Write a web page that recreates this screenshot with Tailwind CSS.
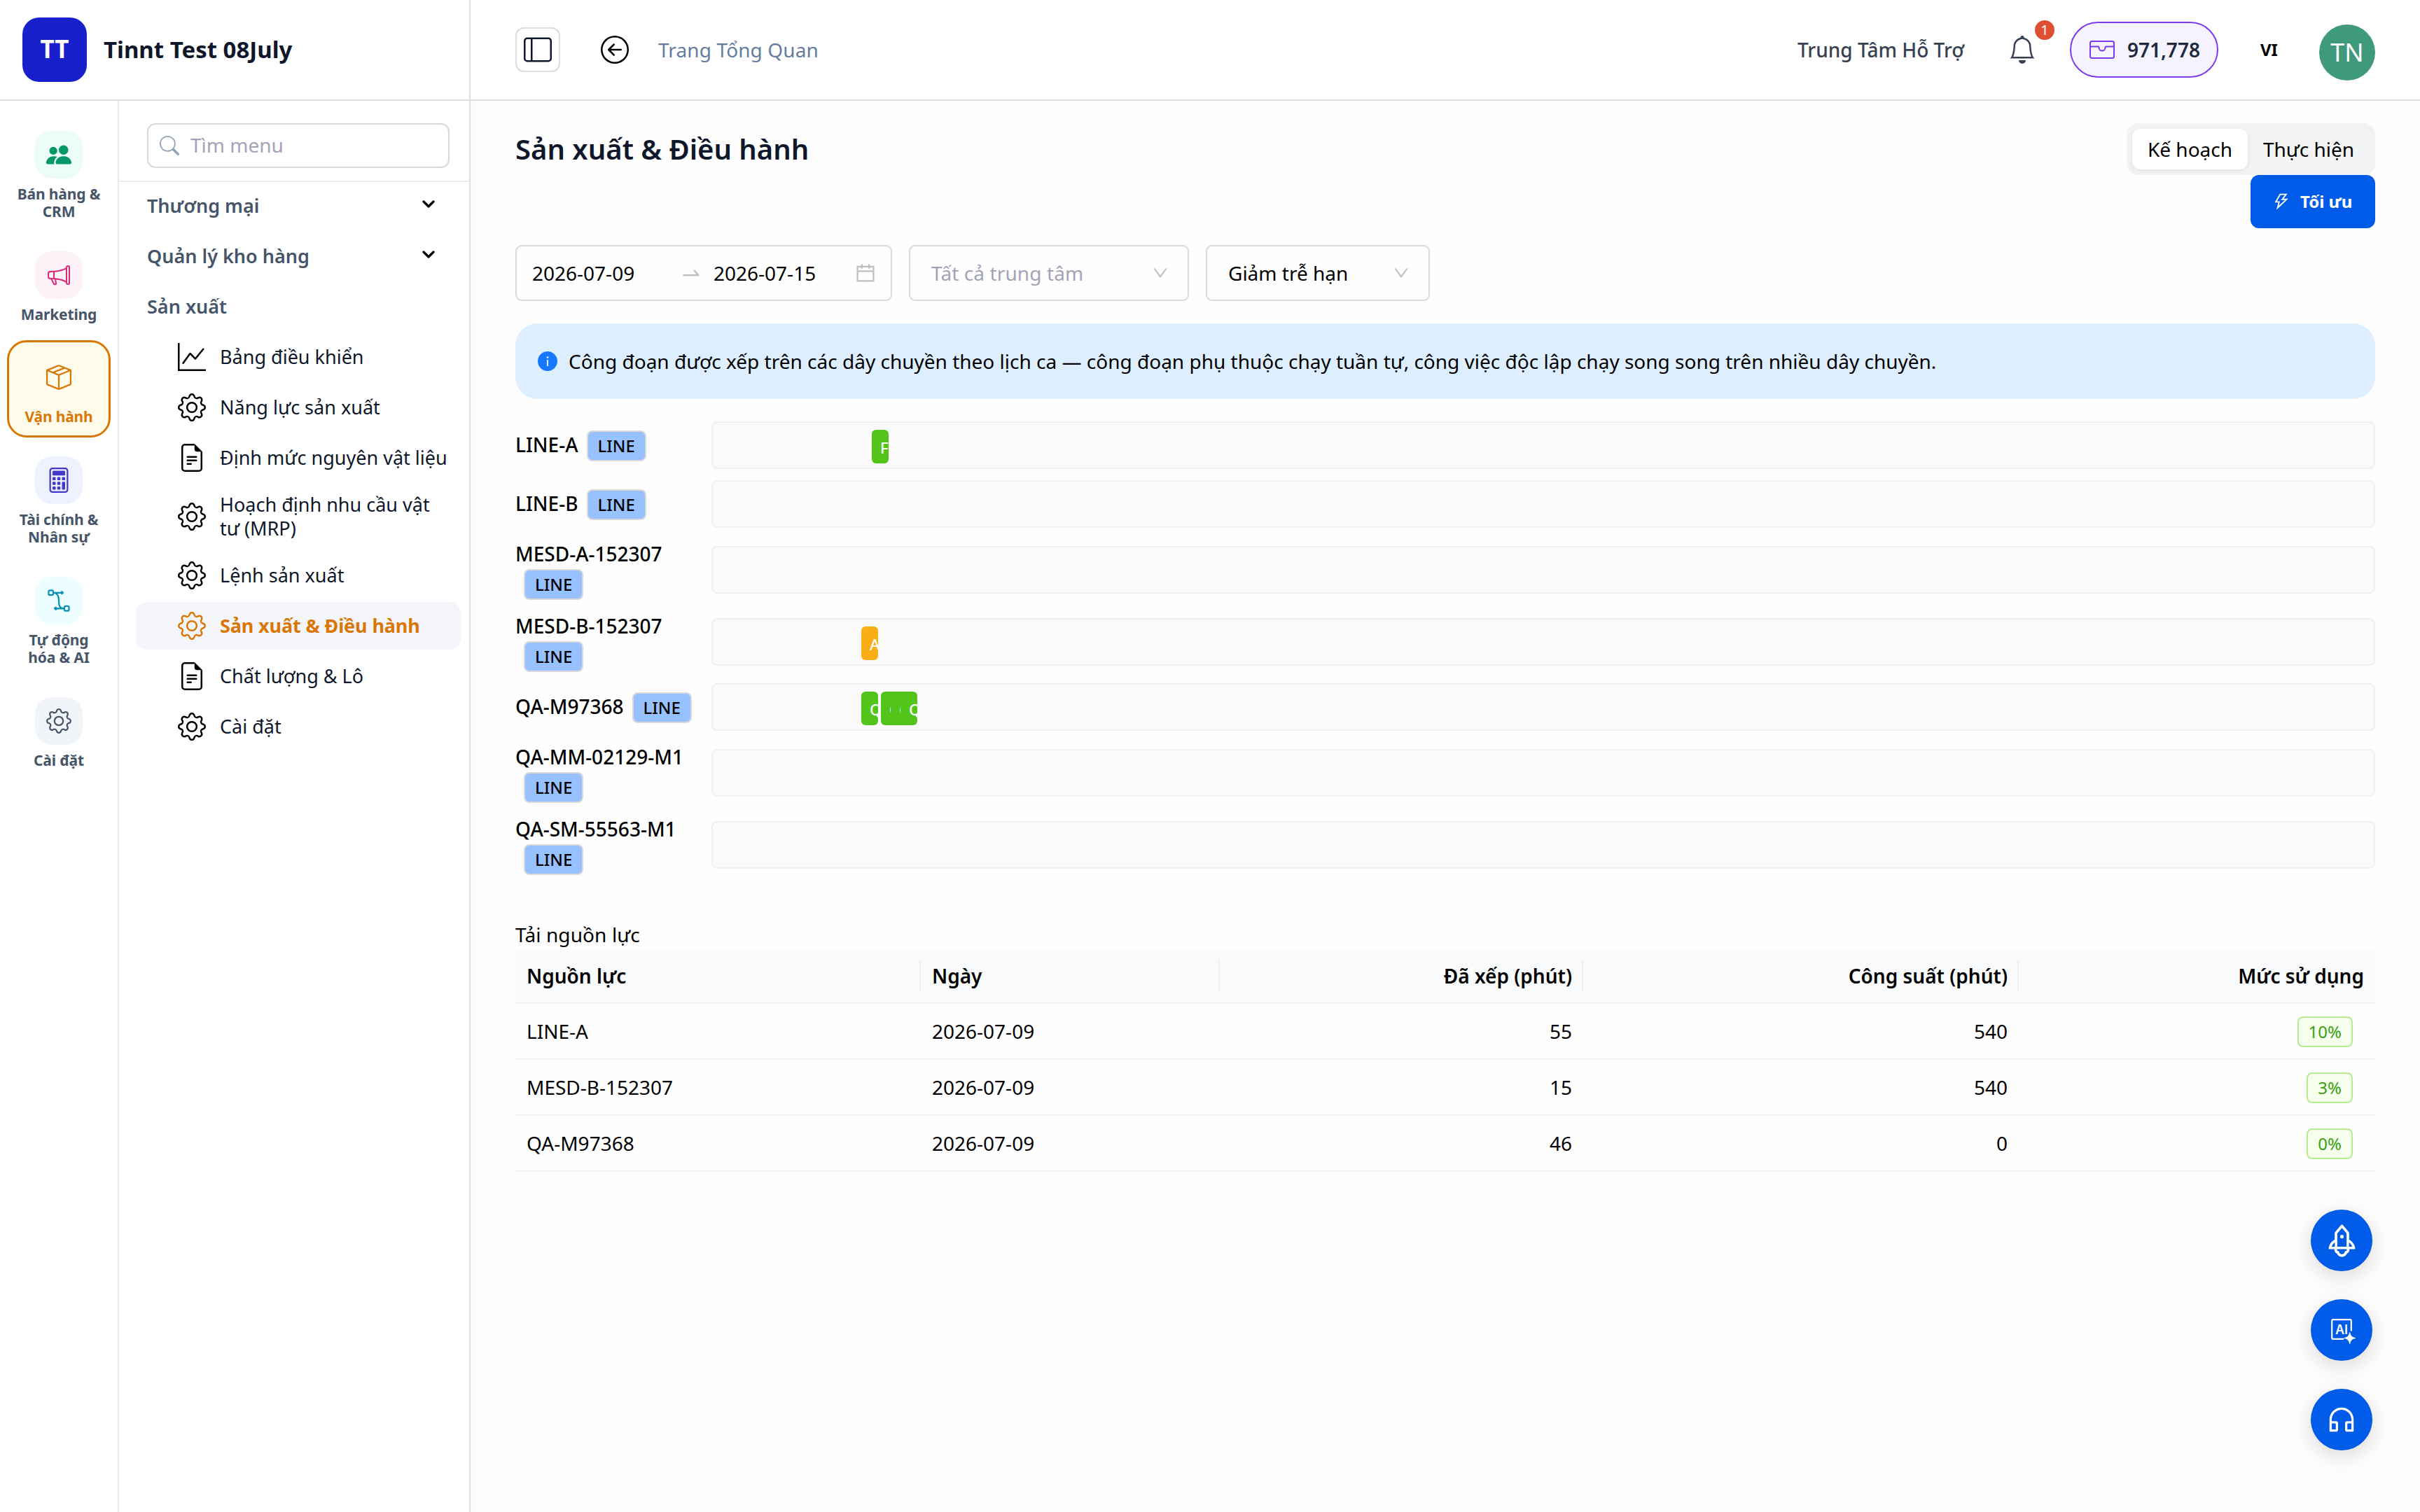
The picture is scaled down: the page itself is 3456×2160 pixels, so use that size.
<!DOCTYPE html>
<html lang="vi">
<head>
    <meta charset="UTF-8">
    <meta name="viewport" content="width=device-width, initial-scale=1.0">
    <title>Sản xuất & Điều hành</title>
    <script src="https://cdn.jsdelivr.net/npm/@tailwindcss/browser@4"></script>
</head>
<body class="bg-white font-['Noto_Sans',sans-serif] text-[28px] text-black leading-[44px]">

<!-- Icons dùng chung -->
<svg class="hidden">
    <symbol id="gear" viewBox="0 0 16 16"><path d="M8 4.754a3.246 3.246 0 1 0 0 6.492 3.246 3.246 0 0 0 0-6.492zM5.754 8a2.246 2.246 0 1 1 4.492 0 2.246 2.246 0 0 1-4.492 0z"/><path d="M9.796 1.343c-.527-1.79-3.065-1.79-3.592 0l-.094.319a.873.873 0 0 1-1.255.52l-.292-.16c-1.64-.892-3.433.902-2.54 2.541l.159.292a.873.873 0 0 1-.52 1.255l-.319.094c-1.79.527-1.79 3.065 0 3.592l.319.094a.873.873 0 0 1 .52 1.255l-.16.292c-.892 1.64.901 3.434 2.541 2.54l.292-.159a.873.873 0 0 1 1.255.52l.094.319c.527 1.79 3.065 1.79 3.592 0l.094-.319a.873.873 0 0 1 1.255-.52l.292.16c1.64.893 3.434-.902 2.54-2.541l-.159-.292a.873.873 0 0 1 .52-1.255l.319-.094c1.79-.527 1.79-3.065 0-3.592l-.319-.094a.873.873 0 0 1-.52-1.255l.16-.292c.893-1.64-.902-3.433-2.541-2.54l-.292.159a.873.873 0 0 1-1.255-.52l-.094-.319zm-2.633.283c.246-.835 1.428-.835 1.674 0l.094.319a1.873 1.873 0 0 0 2.693 1.115l.291-.16c.764-.415 1.6.42 1.184 1.185l-.159.292a1.873 1.873 0 0 0 1.116 2.692l.318.094c.835.246.835 1.428 0 1.674l-.319.094a1.873 1.873 0 0 0-1.115 2.693l.16.291c.415.764-.42 1.6-1.185 1.184l-.291-.159a1.873 1.873 0 0 0-2.693 1.116l-.094.318c-.246.835-1.428.835-1.674 0l-.094-.319a1.873 1.873 0 0 0-2.692-1.115l-.292.16c-.764.415-1.6-.42-1.184-1.185l.159-.291A1.873 1.873 0 0 0 1.945 8.93l-.319-.094c-.835-.246-.835-1.428 0-1.674l.319-.094A1.873 1.873 0 0 0 3.06 4.377l-.16-.292c-.415-.764.42-1.6 1.185-1.184l.292.159a1.873 1.873 0 0 0 2.692-1.115l.094-.319z"/></symbol>
    <symbol id="file" viewBox="0 0 16 16"><path d="M4 0h5.5v1H4a1 1 0 0 0-1 1v12a1 1 0 0 0 1 1h8a1 1 0 0 0 1-1V4.5h1V14a2 2 0 0 1-2 2H4a2 2 0 0 1-2-2V2a2 2 0 0 1 2-2z"/><path d="M9.5 3V0L14 4.5h-3A1.5 1.5 0 0 1 9.5 3z"/><path d="M5.5 7a.5.5 0 0 0 0 1h5a.5.5 0 0 0 0-1zM5 9.5a.5.5 0 0 1 .5-.5h5a.5.5 0 0 1 0 1h-5a.5.5 0 0 1-.5-.5m0 2a.5.5 0 0 1 .5-.5h2a.5.5 0 0 1 0 1h-2a.5.5 0 0 1-.5-.5"/></symbol>
    <symbol id="chevron" viewBox="0 0 18 12"><path d="M2 2l7 7 7-7" fill="none" stroke="currentColor" stroke-width="3.2" stroke-linecap="round" stroke-linejoin="round"/></symbol>
    <symbol id="down" viewBox="0 0 1024 1024"><path d="M884 256h-75c-5.1 0-9.9 2.5-12.9 6.6L512 654.2 227.9 262.6c-3-4.1-7.8-6.6-12.9-6.6h-75c-6.5 0-10.3 7.4-6.5 12.7l352.6 486.1c12.8 17.6 39 17.6 51.7 0l352.6-486.1c3.9-5.3.1-12.7-6.4-12.7z"/></symbol>
</svg>

<div class="flex h-[2160px] w-[3456px] overflow-hidden">

    <!-- Sidebar -->
    <aside class="flex w-[672px] shrink-0 flex-col border-r-2 border-[#dddee4]">
        <div class="flex h-36 shrink-0 items-center gap-6 border-b-2 border-[#dddee4] pl-8">
            <div class="flex size-[92px] items-center justify-center rounded-3xl bg-[#1720cb] pb-[3px] text-[35px] font-bold text-white">TT</div>
            <span class="text-[33px] font-bold text-[#0f172a]">Tinnt Test 08July</span>
        </div>

        <div class="flex min-h-0 flex-1">
            <!-- Phân hệ -->
            <nav class="flex w-[170px] shrink-0 flex-col gap-2 border-r-2 border-[#e8e8ef] px-2.5 pt-6 text-center text-[21px] leading-[25.2px] font-bold tracking-[-0.15px] text-[#475569]">
                <div class="flex flex-col items-center gap-2.5 rounded-[28px] border-[3px] border-transparent pt-4 pb-[13.4px]">
                    <div class="flex size-[68px] items-center justify-center rounded-3xl bg-[#ecfdf5] text-[#059669]">
                        <svg class="size-9 fill-current" viewBox="0 0 16 16"><path d="M7 14s-1 0-1-1 1-4 5-4 5 3 5 4-1 1-1 1H7Zm4-6a3 3 0 1 0 0-6 3 3 0 0 0 0 6Zm-5.784 6A2.238 2.238 0 0 1 5 13c0-1.355.68-2.75 1.936-3.72A6.325 6.325 0 0 0 5 9c-4 0-5 3-5 4s1 1 1 1h4.216ZM4.5 8a2.5 2.5 0 1 0 0-5 2.5 2.5 0 0 0 0 5Z"/></svg>
                    </div>
                    <span>Bán hàng &amp;<br>CRM</span>
                </div>
                <div class="flex flex-col items-center gap-2.5 rounded-[28px] border-[3px] border-transparent pt-4 pb-[13.4px]">
                    <div class="flex size-[68px] items-center justify-center rounded-3xl bg-[#fdf2f8] text-[#db2777]">
                        <svg class="size-8 fill-current" viewBox="0 0 16 16"><path d="M13 2.5a1.5 1.5 0 0 1 3 0v11a1.5 1.5 0 0 1-3 0v-.214c-2.162-1.241-4.49-1.843-6.912-2.083l.405 2.712A1 1 0 0 1 5.51 15.1h-.548a1 1 0 0 1-.916-.599l-1.85-3.49-.202-.003A2.014 2.014 0 0 1 0 9V7a2.02 2.02 0 0 1 1.992-2.013 75 75 0 0 0 2.483-.075c3.043-.154 6.148-.849 8.525-2.199zm1 0v11a.5.5 0 0 0 1 0v-11a.5.5 0 0 0-1 0m-1 1.35c-2.344 1.205-5.209 1.842-8 2.033v4.233q.27.015.537.036c2.568.189 5.093.744 7.463 1.993zm-9 6.215v-4.13a95 95 0 0 1-1.992.052A1.02 1.02 0 0 0 1 7v2c0 .55.448 1.002 1.006 1.009A61 61 0 0 1 4 10.065m-.657.975 1.609 3.037.01.024h.548l-.002-.014-.443-2.966a68 68 0 0 0-1.722-.082z"/></svg>
                    </div>
                    <span>Marketing</span>
                </div>
                <div class="flex flex-col items-center gap-2.5 rounded-[28px] border-[3px] border-[#d97706] bg-[#fffbeb] pt-4 pb-[13.4px] text-[#d97706]">
                    <div class="flex size-[68px] items-center justify-center">
                        <svg class="size-9 fill-current" viewBox="0 0 16 16"><path d="M8.186 1.113a.5.5 0 0 0-.372 0L1.846 3.5l2.404.961L10.404 2zm3.564 1.426L5.596 5 8 5.961 14.154 3.5zm3.25 1.7-6.5 2.6v7.922l6.5-2.6V4.24zM7.5 14.762V6.838L1 4.239v7.923zM7.443.184a1.5 1.5 0 0 1 1.114 0l7.129 2.852A.5.5 0 0 1 16 3.5v8.662a1 1 0 0 1-.629.928l-7.185 2.874a.5.5 0 0 1-.372 0L.63 13.09a1 1 0 0 1-.63-.928V3.5a.5.5 0 0 1 .314-.464z"/></svg>
                    </div>
                    <span>Vận hành</span>
                </div>
                <div class="flex flex-col items-center gap-2.5 rounded-[28px] border-[3px] border-transparent pt-4 pb-[13.4px]">
                    <div class="flex size-[68px] items-center justify-center rounded-3xl bg-[#eef2ff] text-[#4338ca]">
                        <svg class="size-9 fill-current" viewBox="0 0 16 16"><path d="M12 1a1 1 0 0 1 1 1v12a1 1 0 0 1-1 1H4a1 1 0 0 1-1-1V2a1 1 0 0 1 1-1zM4 0a2 2 0 0 0-2 2v12a2 2 0 0 0 2 2h8a2 2 0 0 0 2-2V2a2 2 0 0 0-2-2z"/><rect x="4" y="2" width="8" height="3" rx=".5"/><rect x="4" y="6" width="2" height="2" rx=".5"/><rect x="7" y="6" width="2" height="2" rx=".5"/><rect x="10" y="6" width="2" height="2" rx=".5"/><rect x="4" y="9" width="2" height="2" rx=".5"/><rect x="7" y="9" width="2" height="2" rx=".5"/><rect x="10" y="9" width="2" height="5" rx=".5"/><rect x="4" y="12" width="2" height="2" rx=".5"/><rect x="7" y="12" width="2" height="2" rx=".5"/></svg>
                    </div>
                    <span>Tài chính &amp;<br>Nhân sự</span>
                </div>
                <div class="flex flex-col items-center gap-2.5 rounded-[28px] border-[3px] border-transparent pt-4 pb-[13.4px]">
                    <div class="flex size-[68px] items-center justify-center rounded-3xl bg-[#ecfeff] text-[#0891b2]">
                        <svg class="size-9 fill-current" viewBox="0 0 16 16"><path d="M1 2.5A1.5 1.5 0 0 1 2.5 1h1A1.5 1.5 0 0 1 5 2.5h4.134a1 1 0 1 1 0 1h-2.01q.269.27.484.605C8.246 5.097 8.5 6.459 8.5 8c0 1.993.257 3.092.713 3.7.356.476.895.721 1.787.784A1.5 1.5 0 0 1 12.5 11h1a1.5 1.5 0 0 1 1.5 1.5v1a1.5 1.5 0 0 1-1.5 1.5h-1a1.5 1.5 0 0 1-1.5-1.5H6.866a1 1 0 1 1 0-1h1.711a3 3 0 0 1-.165-.2C7.743 11.407 7.5 10.007 7.5 8c0-1.46-.246-2.597-.733-3.355-.39-.605-.952-1-1.767-1.112A1.5 1.5 0 0 1 3.5 5h-1A1.5 1.5 0 0 1 1 3.5zM2.5 2a.5.5 0 0 0-.5.5v1a.5.5 0 0 0 .5.5h1a.5.5 0 0 0 .5-.5v-1a.5.5 0 0 0-.5-.5zm10 10a.5.5 0 0 0-.5.5v1a.5.5 0 0 0 .5.5h1a.5.5 0 0 0 .5-.5v-1a.5.5 0 0 0-.5-.5z"/></svg>
                    </div>
                    <span>Tự động<br>hóa &amp; AI</span>
                </div>
                <div class="flex flex-col items-center gap-2.5 rounded-[28px] border-[3px] border-transparent pt-4 pb-[13.4px]">
                    <div class="flex size-[68px] items-center justify-center rounded-3xl bg-[#f1f5f9] text-[#475569]">
                        <svg class="size-9 fill-current"><use href="#gear"/></svg>
                    </div>
                    <span>Cài đặt</span>
                </div>
            </nav>

            <!-- Menu -->
            <div class="flex flex-1 flex-col">
                <div class="h-[116px] border-b-2 border-[#ececf1] pt-8 pr-7 pl-10">
                    <div class="flex h-16 items-center gap-4 rounded-xl border-2 border-[#d9d9d9] px-4 text-[#a3a3b8]">
                        <svg class="size-7 fill-[#94a3b8]" viewBox="0 0 16 16"><path d="M11.742 10.344a6.5 6.5 0 1 0-1.397 1.398h-.001q.044.06.098.115l3.85 3.85a1 1 0 0 0 1.415-1.414l-3.85-3.85a1 1 0 0 0-.115-.1zM12 6.5a5.5 5.5 0 1 1-11 0 5.5 5.5 0 0 1 11 0"/></svg>
                        <span class="pb-0.5">Tìm menu</span>
                    </div>
                </div>
                <div class="flex flex-col gap-1 pr-3 pl-6 text-[27px] leading-[34px] text-[#0f172a]">
                    <div class="flex h-[68px] items-center justify-between pr-[37px] pl-4 font-semibold text-[#475569]">
                        <span>Thương mại</span>
                        <svg class="mb-1 h-3 w-[18px] text-black"><use href="#chevron"/></svg>
                    </div>
                    <div class="flex h-[68px] items-center justify-between pr-[37px] pl-4 font-semibold text-[#475569]">
                        <span>Quản lý kho hàng</span>
                        <svg class="mb-1 h-3 w-[18px] text-black"><use href="#chevron"/></svg>
                    </div>
                    <div class="flex h-[68px] items-center pl-4 font-semibold text-[#475569]">Sản xuất</div>

                    <div class="flex h-[68px] items-center gap-5 pl-[60px]">
                        <svg class="size-10 shrink-0 fill-black" viewBox="0 0 16 16"><path d="M0 0h1v15h15v1H0zm14.817 3.113a.5.5 0 0 1 .07.704l-4.5 5.5a.5.5 0 0 1-.74.037L7.06 6.767l-3.656 5.027a.5.5 0 0 1-.808-.588l4-5.5a.5.5 0 0 1 .758-.06l2.609 2.61 4.15-5.073a.5.5 0 0 1 .704-.07"/></svg>
                        <span>Bảng điều khiển</span>
                    </div>
                    <div class="flex h-[68px] items-center gap-5 pl-[60px]">
                        <svg class="size-10 shrink-0 fill-black"><use href="#gear"/></svg>
                        <span>Năng lực sản xuất</span>
                    </div>
                    <div class="flex h-[68px] items-center gap-5 pl-[60px]">
                        <svg class="size-10 shrink-0 fill-black"><use href="#file"/></svg>
                        <span class="whitespace-nowrap">Định mức nguyên vật liệu</span>
                    </div>
                    <div class="flex h-[92px] items-center gap-5 pl-[60px]">
                        <svg class="size-10 shrink-0 fill-black"><use href="#gear"/></svg>
                        <span>Hoạch định nhu cầu vật<br>tư (MRP)</span>
                    </div>
                    <div class="flex h-[68px] items-center gap-5 pl-[60px]">
                        <svg class="size-10 shrink-0 fill-black"><use href="#gear"/></svg>
                        <span>Lệnh sản xuất</span>
                    </div>
                    <div class="flex h-[68px] items-center gap-5 rounded-2xl bg-[#f4f5fa] pl-[60px] font-bold tracking-[-0.13px] text-[#d97706]">
                        <svg class="size-10 shrink-0 fill-current"><use href="#gear"/></svg>
                        <span>Sản xuất &amp; Điều hành</span>
                    </div>
                    <div class="flex h-[68px] items-center gap-5 pl-[60px]">
                        <svg class="size-10 shrink-0 fill-black"><use href="#file"/></svg>
                        <span>Chất lượng &amp; Lô</span>
                    </div>
                    <div class="flex h-[68px] items-center gap-5 pl-[60px]">
                        <svg class="size-10 shrink-0 fill-black"><use href="#gear"/></svg>
                        <span>Cài đặt</span>
                    </div>
                </div>
            </div>
        </div>
    </aside>

    <div class="flex min-w-0 flex-1 flex-col">
        <!-- Header -->
        <header class="flex h-36 shrink-0 items-center border-b-2 border-[#dddee4] px-16">
            <div class="flex size-16 items-center justify-center rounded-xl border-2 border-[#dddee4]">
                <svg class="size-10 fill-[#0f172a]" viewBox="0 0 16 16"><path d="M0 3a2 2 0 0 1 2-2h12a2 2 0 0 1 2 2v10a2 2 0 0 1-2 2H2a2 2 0 0 1-2-2zm5-1v12h9a1 1 0 0 0 1-1V3a1 1 0 0 0-1-1zM4 2H2a1 1 0 0 0-1 1v10a1 1 0 0 0 1 1h2z"/></svg>
            </div>
            <svg class="ml-[58px] size-10" viewBox="0 0 16 16"><path d="M1 8a7 7 0 1 0 14 0A7 7 0 0 0 1 8m15 0A8 8 0 1 1 0 8a8 8 0 0 1 16 0m-4.5-.5a.5.5 0 0 1 0 1H5.707l2.147 2.146a.5.5 0 0 1-.708.708l-3-3a.5.5 0 0 1 0-.708l3-3a.5.5 0 1 1 .708.708L5.707 7.5z"/></svg>
            <span class="ml-[42px] tracking-[0.12px] text-[#657ca0]">Trang Tổng Quan</span>

            <div class="ml-auto flex items-center">
                <span class="font-medium text-[#374151]">Trung Tâm Hỗ Trợ</span>
                <div class="relative ml-[63px] size-10">
                    <svg class="size-10 fill-[#374151]" viewBox="0 0 16 16"><path d="M8 16a2 2 0 0 0 2-2H6a2 2 0 0 0 2 2M8 1.918l-.797.161A4 4 0 0 0 4 6c0 .628-.134 2.197-.459 3.742-.16.767-.376 1.566-.663 2.258h10.244c-.287-.692-.502-1.49-.663-2.258C12.134 8.197 12 6.628 12 6a4 4 0 0 0-3.203-3.92zM14.22 12c.223.447.481.801.78 1H1c.299-.199.557-.553.78-1C2.68 10.2 3 6.88 3 6c0-2.42 1.72-4.44 4.005-4.901a1 1 0 1 1 1.99 0A5 5 0 0 1 13 6c0 .88.32 4.2 1.22 6"/></svg>
                    <span class="absolute -top-[22px] left-[38px] flex size-7 items-center justify-center rounded-full bg-[#de4f33] text-[20px] leading-none text-white">1</span>
                </div>
                <div class="ml-12 flex h-20 w-[212px] items-center gap-[18px] rounded-full border-2 border-[#7c3aed] bg-[#f5f3ff] pl-[26px]">
                    <svg class="h-[26px] w-9" viewBox="0 0 36 26" fill="none" stroke="#7c3aed" stroke-width="2"><rect x="1" y="1" width="34" height="24" rx="2.5"/><path d="M1 8.5h11.2c1 0 1.3.8 1.3 1.6a4.5 4.5 0 0 0 9 0c0-.8.3-1.6 1.3-1.6H35"/></svg>
                    <span class="font-semibold text-[#1e293b]">971,778</span>
                </div>
                <span class="ml-[60px] w-[26px] text-[24px] font-bold">VI</span>
                <div class="mt-2 ml-[58px] flex size-20 items-center justify-center rounded-full bg-[#3f997d] text-[36px] text-white">TN</div>
            </div>
        </header>

        <main class="relative flex-1 bg-[linear-gradient(to_right,#f9fafa,#fefefe_28px)] px-16 pt-8">
            <div class="flex items-start justify-between">
                <h1 class="pt-[9px] text-[40px] leading-[56px] font-semibold text-[#0f172a]">Sản xuất &amp; Điều hành</h1>
                <div class="flex flex-col items-end">
                    <div class="flex h-[74px] rounded-2xl bg-[#f2f3f5] p-2">
                        <div class="flex w-[165px] items-center justify-center rounded-xl bg-white shadow-[0_2px_6px_rgba(0,0,0,0.08)]">Kế hoạch</div>
                        <div class="flex w-[174px] items-center justify-center">Thực hiện</div>
                    </div>
                    <button class="flex h-[76px] w-[178px] items-center gap-[13px] rounded-xl bg-[#005be8] pl-[30px] text-[24px] font-bold text-white">
                        <svg class="size-7 fill-current" viewBox="0 0 1024 1024"><path d="M848 359.3H627.7L825.8 109c4.1-5.3.4-13-6.3-13H436c-2.8 0-5.5 1.5-6.9 4L170 547.5c-3.1 5.3.7 12 6.9 12h174.4l-89.4 357.6c-1.9 7.8 7.5 13.3 13.3 7.7L853.5 373c5.2-4.9 1.7-13.7-5.5-13.7zM378.2 732.5l60.3-241H281.1l189.6-327.4h224.6L487 427.4h211L378.2 732.5z"/></svg>
                        <span>Tối ưu</span>
                    </button>
                </div>
            </div>

            <!-- Bộ lọc -->
            <div class="mt-6 flex gap-6">
                <div class="flex h-20 w-[538px] items-center rounded-[9px] border-2 border-[#d9d9d9] pr-5 pl-[22px]">
                    <span class="w-[211px]">2026-07-09</span>
                    <svg class="size-8 fill-[#bfbfbf]" viewBox="0 0 1024 1024"><path d="M873.1 596.2l-164-208A32 32 0 00684 376h-64.8c-6.7 0-10.4 7.7-6.3 13l144.3 183H152c-4.4 0-8 3.6-8 8v60c0 4.4 3.6 8 8 8h695.9c26.8 0 41.7-30.8 25.2-51.8z"/></svg>
                    <span class="ml-4">2026-07-15</span>
                    <svg class="ml-auto size-8 fill-[#bfbfbf]" viewBox="0 0 1024 1024"><path d="M880 184H712v-64c0-4.4-3.6-8-8-8h-56c-4.4 0-8 3.6-8 8v64H384v-64c0-4.4-3.6-8-8-8h-56c-4.4 0-8 3.6-8 8v64H144c-17.7 0-32 14.3-32 32v664c0 17.7 14.3 32 32 32h736c17.7 0 32-14.3 32-32V216c0-17.7-14.3-32-32-32zm-40 656H184V460h656v380zM184 392V256h128v48c0 4.4 3.6 8 8 8h56c4.4 0 8-3.6 8-8v-48h256v48c0 4.4 3.6 8 8 8h56c4.4 0 8-3.6 8-8v-48h128v136H184z"/></svg>
                </div>
                <div class="flex h-20 w-[400px] items-center justify-between rounded-[9px] border-2 border-[#d9d9d9] pr-[26px] pl-[30px] text-[#a3a3b8]">
                    <span class="tracking-[0.1px]">Tất cả trung tâm</span>
                    <svg class="size-[26px] fill-[#bfbfbf]"><use href="#down"/></svg>
                </div>
                <div class="flex h-20 w-[320px] items-center justify-between rounded-[9px] border-2 border-[#d9d9d9] pr-[26px] pl-[30px]">
                    <span>Giảm trễ hạn</span>
                    <svg class="size-[26px] fill-[#bfbfbf]"><use href="#down"/></svg>
                </div>
            </div>

            <div class="mt-8 flex h-[108px] items-center gap-3.5 rounded-[32px] bg-[#ddeefe] px-[30px]">
                <svg class="size-8 fill-[#1677ff]" viewBox="0 0 1024 1024"><path d="M512 64C264.6 64 64 264.6 64 512s200.6 448 448 448 448-200.6 448-448S759.4 64 512 64zm32 664c0 4.4-3.6 8-8 8h-48c-4.4 0-8-3.6-8-8V456c0-4.4 3.6-8 8-8h48c4.4 0 8 3.6 8 8v272zm-32-344a48.01 48.01 0 010-96 48.01 48.01 0 010 96z"/></svg>
                <span>Công đoạn được xếp trên các dây chuyền theo lịch ca — công đoạn phụ thuộc chạy tuần tự, công việc độc lập chạy song song trên nhiều dây chuyền.</span>
            </div>

            <!-- Lịch theo dây chuyền -->
            <div class="mt-8 flex flex-col gap-4 font-medium">
                <div class="flex items-center">
                    <div class="flex w-[280px]">
                        <span class="leading-[43px]">LINE-A</span>
                        <span class="mt-px ml-3 h-11 rounded-lg border-2 border-[#d9d9d9] bg-[#98c1ff] px-3.5 text-[24px] leading-10">LINE</span>
                    </div>
                    <div class="relative h-[68px] flex-1 rounded-lg border-2 border-[#f0f0f0] bg-[#fafafa]">
                        <div class="absolute top-2.5 left-[227px] h-12 w-6 overflow-hidden rounded-md bg-[#52c41a] pl-3 text-[22px] leading-[50px] text-white">F</div>
                    </div>
                </div>
                <div class="flex items-center">
                    <div class="flex w-[280px]">
                        <span class="leading-[43px]">LINE-B</span>
                        <span class="mt-px ml-3 h-11 rounded-lg border-2 border-[#d9d9d9] bg-[#98c1ff] px-3.5 text-[24px] leading-10">LINE</span>
                    </div>
                    <div class="h-[68px] flex-1 rounded-lg border-2 border-[#f0f0f0] bg-[#fafafa]"></div>
                </div>
                <div class="flex items-center">
                    <div class="flex w-[280px] flex-col items-start">
                        <span class="leading-[43px]">MESD-A-152307</span>
                        <span class="ml-3 h-11 rounded-lg border-2 border-[#d9d9d9] bg-[#98c1ff] px-3.5 text-[24px] leading-10">LINE</span>
                    </div>
                    <div class="h-[68px] flex-1 rounded-lg border-2 border-[#f0f0f0] bg-[#fafafa]"></div>
                </div>
                <div class="flex items-center">
                    <div class="flex w-[280px] flex-col items-start">
                        <span class="leading-[43px]">MESD-B-152307</span>
                        <span class="ml-3 h-11 rounded-lg border-2 border-[#d9d9d9] bg-[#98c1ff] px-3.5 text-[24px] leading-10">LINE</span>
                    </div>
                    <div class="relative h-[68px] flex-1 rounded-lg border-2 border-[#f0f0f0] bg-[#fafafa]">
                        <div class="absolute top-2.5 left-[212px] h-12 w-6 overflow-hidden rounded-md bg-[#faad14] pl-3 text-[22px] leading-[50px] text-white">A</div>
                    </div>
                </div>
                <div class="flex items-center">
                    <div class="flex w-[280px]">
                        <span class="leading-[43px]">QA-M97368</span>
                        <span class="mt-px ml-3 h-11 rounded-lg border-2 border-[#d9d9d9] bg-[#98c1ff] px-3.5 text-[24px] leading-10">LINE</span>
                    </div>
                    <div class="relative h-[68px] flex-1 rounded-lg border-2 border-[#f0f0f0] bg-[#fafafa]">
                        <div class="absolute top-2.5 left-[212px] h-12 w-6 overflow-hidden rounded-md bg-[#52c41a] pl-3 text-[22px] leading-[50px] text-white">Q</div>
                        <div class="absolute top-2.5 left-[240px] h-12 w-6 overflow-hidden rounded-md bg-[#52c41a] pl-3 text-[22px] leading-[50px] text-white">Q</div>
                        <div class="absolute top-2.5 left-[254px] h-12 w-6 overflow-hidden rounded-md bg-[#52c41a] pl-3 text-[22px] leading-[50px] text-white">Q</div>
                        <div class="absolute top-2.5 left-[268px] h-12 w-6 overflow-hidden rounded-md bg-[#52c41a] pl-3 text-[22px] leading-[50px] text-white">Q</div>
                    </div>
                </div>
                <div class="flex items-center">
                    <div class="flex w-[280px] flex-col items-start">
                        <span class="leading-[43px]">QA-MM-02129-M1</span>
                        <span class="ml-3 h-11 rounded-lg border-2 border-[#d9d9d9] bg-[#98c1ff] px-3.5 text-[24px] leading-10">LINE</span>
                    </div>
                    <div class="h-[68px] flex-1 rounded-lg border-2 border-[#f0f0f0] bg-[#fafafa]"></div>
                </div>
                <div class="flex items-center">
                    <div class="flex w-[280px] flex-col items-start">
                        <span class="leading-[43px]">QA-SM-55563-M1</span>
                        <span class="ml-3 h-11 rounded-lg border-2 border-[#d9d9d9] bg-[#98c1ff] px-3.5 text-[24px] leading-10">LINE</span>
                    </div>
                    <div class="h-[68px] flex-1 rounded-lg border-2 border-[#f0f0f0] bg-[#fafafa]"></div>
                </div>
            </div>

            <!-- Tải nguồn lực -->
            <div class="mt-[64px] leading-[42px] tracking-[0.1px]">Tải nguồn lực</div>
            <div class="grid grid-cols-[579px_427px_519px_622px_509px]">
                <div class="col-span-5 grid h-[78px] grid-cols-subgrid items-center border-b-2 border-[#f0f0f0] bg-[#f9fafc] font-semibold">
                    <div class="border-r-2 border-[#f0f0f0] px-4">Nguồn lực</div>
                    <div class="border-r-2 border-[#f0f0f0] px-4">Ngày</div>
                    <div class="border-r-2 border-[#f0f0f0] pr-3.5 text-right">Đã xếp (phút)</div>
                    <div class="border-r-2 border-[#f0f0f0] pr-3.5 text-right">Công suất (phút)</div>
                    <div class="px-4 text-right">Mức sử dụng</div>
                </div>
                <div class="col-span-5 grid h-20 grid-cols-subgrid items-center border-b-2 border-[#f0f0f0]">
                    <div class="px-4">LINE-A</div>
                    <div class="px-4">2026-07-09</div>
                    <div class="px-4 text-right">55</div>
                    <div class="px-4 text-right">540</div>
                    <div class="mt-0.5 flex justify-end pr-8">
                        <span class="h-11 rounded-lg border-2 border-[#b7eb8f] bg-[#f6ffed] px-3.5 text-[24px] leading-10 text-[#389e0d]">10%</span>
                    </div>
                </div>
                <div class="col-span-5 grid h-20 grid-cols-subgrid items-center border-b-2 border-[#f0f0f0]">
                    <div class="px-4">MESD-B-152307</div>
                    <div class="px-4">2026-07-09</div>
                    <div class="px-4 text-right">15</div>
                    <div class="px-4 text-right">540</div>
                    <div class="mt-0.5 flex justify-end pr-8">
                        <span class="h-11 rounded-lg border-2 border-[#b7eb8f] bg-[#f6ffed] px-3.5 text-[24px] leading-10 text-[#389e0d]">3%</span>
                    </div>
                </div>
                <div class="col-span-5 grid h-20 grid-cols-subgrid items-center border-b-2 border-[#f0f0f0]">
                    <div class="px-4">QA-M97368</div>
                    <div class="px-4">2026-07-09</div>
                    <div class="px-4 text-right">46</div>
                    <div class="px-4 text-right">0</div>
                    <div class="mt-0.5 flex justify-end pr-8">
                        <span class="h-11 rounded-lg border-2 border-[#b7eb8f] bg-[#f6ffed] px-3.5 text-[24px] leading-10 text-[#389e0d]">0%</span>
                    </div>
                </div>
            </div>

            <!-- Nút nổi -->
            <div class="absolute right-[68px] bottom-[88px] flex flex-col gap-10">
                <div class="flex size-[88px] items-center justify-center rounded-full bg-[#005be8] shadow-[0_8px_32px_rgba(0,0,0,0.15)]">
                    <svg class="size-[55px] fill-white" viewBox="0 0 1024 1024"><path d="M864 736c0-111.6-65.4-208-160-252.9V317.3c0-15.1-5.3-29.7-15.1-41.2L536.5 95.4C530.1 87.8 521 84 512 84s-18.1 3.8-24.5 11.4L335.1 276.1a63.97 63.97 0 00-15.1 41.2v165.8C225.4 528 160 624.4 160 736h156.5c-2.3 7.2-3.5 15-3.5 23.8 0 22.1 7.6 43.7 21.4 60.8a97.2 97.2 0 0043.1 30.6c23.1 54 75.6 88.8 134.5 88.8 29.1 0 57.3-8.6 81.4-24.8 23.6-15.8 41.9-37.9 53-64a97 97 0 0043.1-30.5 97.52 97.52 0 0021.4-60.8c0-8.4-1.1-16.4-3.1-23.8H864zM762.3 621.4c9.4 14.6 17 30.3 22.5 46.6H700V558.7a211.6 211.6 0 0162.3 62.7zM388 483.1V318.8l124-147 124 147V668H388V483.1zM239.2 668c5.5-16.3 13.1-32 22.5-46.6 16.3-25.2 37.5-46.5 62.3-62.7V668h-84.8zm388.9 116.2c-5.2 3-11.2 4.2-17.1 3.4l-19.5-2.4-2.8 19.4c-5.4 37.9-38.4 66.5-76.7 66.5-38.3 0-71.3-28.6-76.7-66.5l-2.8-19.5-19.5 2.5a27.7 27.7 0 01-17.1-3.5c-8.7-5-14.1-14.3-14.1-24.4 0-10.6 5.9-19.4 14.6-23.8h231.3c8.8 4.5 14.6 13.3 14.6 23.8-.1 10.2-5.5 19.6-14.3 24.5zM464 400a48 48 0 1096 0 48 48 0 10-96 0z"/></svg>
                </div>
                <div class="flex size-[88px] items-center justify-center rounded-full bg-[#005be8] shadow-[0_8px_32px_rgba(0,0,0,0.15)]">
                    <svg class="size-11" viewBox="0 0 44 44"><path d="M35.8 23.5V9A1.8 1.8 0 0 0 34 7.2H10A1.8 1.8 0 0 0 8.200 9v24a1.800 1.800 0 0 0 1.800 1.800h15" fill="none" stroke="#fff" stroke-width="2.2"/><path d="M33.7 25.3c1.2 5.3 3 7.1 8.3 8.3-5.3 1.2-7.1 3-8.3 8.3-1.2-5.3-3-7.1-8.3-8.3 5.3-1.2 7.1-3 8.3-8.3z" fill="#fff" stroke="#fff" stroke-width=".8"/><text x="22" y="27.5" text-anchor="middle" font-family="Inter, sans-serif" font-size="18" font-weight="600" fill="#fff">AI</text></svg>
                </div>
                <div class="flex size-[88px] items-center justify-center rounded-full bg-[#005be8] shadow-[0_8px_32px_rgba(0,0,0,0.15)]">
                    <svg class="size-[46px] fill-white" viewBox="0 0 1024 1024"><path d="M512 128c-212.1 0-384 171.9-384 384v360c0 13.3 10.7 24 24 24h184c35.3 0 64-28.7 64-64V624c0-35.3-28.7-64-64-64H200v-48c0-172.3 139.7-312 312-312s312 139.7 312 312v48H688c-35.3 0-64 28.7-64 64v208c0 35.3 28.7 64 64 64h184c13.3 0 24-10.7 24-24V512c0-212.1-171.9-384-384-384zM328 632v192H200V632h128zm496 192H696V632h128v192z"/></svg>
                </div>
            </div>
        </main>
    </div>
</div>
</body>
</html>
